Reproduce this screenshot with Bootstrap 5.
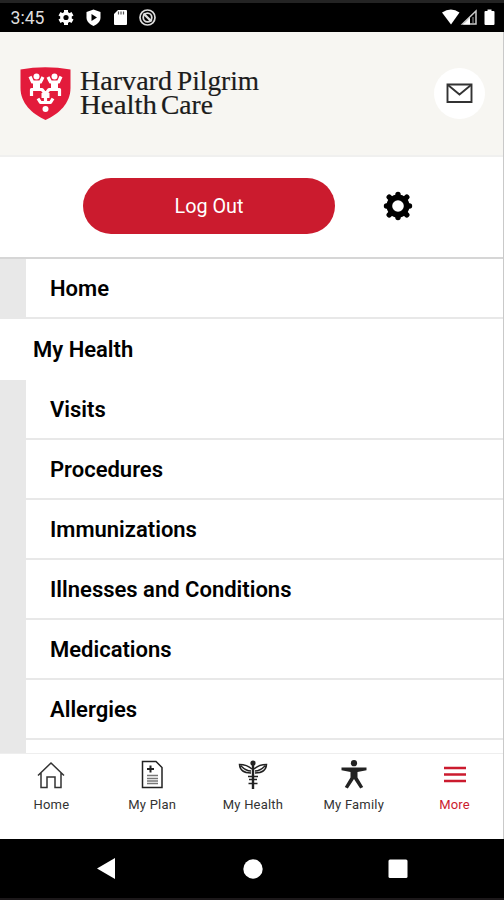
<!DOCTYPE html>
<html lang="en">
<head>
<meta charset="utf-8">
<meta name="viewport" content="width=device-width, initial-scale=1">
<title>Harvard Pilgrim Health Care</title>
<link href="https://cdn.jsdelivr.net/npm/bootstrap@5.3.0/dist/css/bootstrap.min.css" rel="stylesheet">
<style>
  body { font-family: Roboto, "Liberation Sans", sans-serif; color: #000; }
  svg { display: block; flex: none; }
  .screen { width: 504px; height: 900px; }
  .status { height: 32px; background: #000; border-top: 3px solid #232323; padding: 3px 8px 0 10px; font-size: 17px; line-height: 1; color: #e8e8e8; }
  .app { height: 807px; border-right: 1px solid #c9c9c9; }
  .brand-bar { height: 125px; background: #f7f6f2; border-bottom: 2px solid #f0f0ef; padding: 0 18px 0 20px; }
  .brand-text { font-family: "Liberation Serif", serif; font-size: 26.5px; fill: #1c1c1c; stroke: #1c1c1c; stroke-width: .2px; }
  .mail { width: 51px; height: 51px; }
  .account { height: 102px; border-bottom: 2px solid #d6d6d6; padding: 0 0 2px 83px; }
  .logout { width: 252px; height: 56px; background: #cb1b2e; color: #fff; font-size: 19.8px; padding-top: 8px; margin-right: 48px; }
  .logout:hover { background: #b31526; color: #fff; }
  .menu { background: #e8e8e8; }
  .menu .entry { height: 60px; flex: none; margin-left: 26px; padding: 1px 0 0 24px; background: #fff; border-bottom: 2px solid #e8e8e8; font-size: 22px; font-weight: 600; color: #000; text-decoration: none; }
  .menu .section-head { height: 61px; margin-left: 0; padding: 0 0 1px 33px; border: 0; }
  .tabs { height: 86px; border-top: 1px solid #eee; padding-left: 1px; }
  .tabs a { width: 100.8px; flex: none; font-size: 13px; line-height: 16px; letter-spacing: .2px; color: #333; padding-top: 5px; text-decoration: none; }
  .tabs span { margin-top: 4px; }
  .tabs a.current { color: #cb1b2e; }
  .system { height: 61px; background: #000; border-bottom: 2px solid #1c181a; }
</style>
</head>
<body class="bg-white overflow-hidden">
<div class="screen d-flex flex-column overflow-hidden">
  <div class="status d-flex align-items-center flex-shrink-0">
    <svg width="150" height="26" viewBox="0 0 150 26" fill="#fff">
      <text x="0.5" y="17.5" font-size="17.500" textLength="34" lengthAdjust="spacingAndGlyphs" fill="#dedede">3:45</text>
      <g transform="translate(56 11.5)"><g stroke="#fff" stroke-width="4"><path d="M0-7.5V7.5M-6.5-3.75 6.5 3.75M-6.5 3.75 6.5-3.75"/></g><circle r="5.8"/><circle r="2.6" fill="#000"/></g>
      <path d="M83.500 3.500 90.500 6v5.500c0 4-3 6.800-7 8.500-4-1.700-7-4.500-7-8.500V6z"/><path d="m81.500 8 5.500 3.500-5.500 3.500z" fill="#000"/>
      <path d="M108 4h8q1 0 1 1v13q0 1-1 1h-11q-1 0-1-1V8z"/><path d="M108.500 5.500v3M111 5.500v3M113.500 5.500v3" stroke="#555" stroke-width="1.200"/>
      <g transform="translate(137.500 11.500)" fill="none" stroke="#ddd"><circle r="7.500" stroke-width="1.700"/><circle r="4.300" stroke-width="1.800"/><path d="m-4-4 8 8" stroke-width="2.400"/></g>
    </svg>
    <svg class="ms-auto" width="54" height="26" viewBox="0 0 54 26" fill="#fff">
      <path d="M0 6.500Q9 .500 17.500 6.500L9 18.500z"/>
      <path d="M20.500 18 34 5v13z" fill="none" stroke="#ccc" stroke-width="1.500"/><path d="m21 18.500 7-7v7z"/><path d="M31 11v6" stroke="#999" stroke-width="1"/>
      <path d="M45.500 3.500h4V5h2q1 0 1 1v12q0 1-1 1h-8q-1 0-1-1V6q0-1 1-1h2z"/>
    </svg>
  </div>

  <div class="app d-flex flex-column flex-shrink-0 bg-white">
    <header class="brand-bar d-flex align-items-center justify-content-between flex-shrink-0">
      <svg width="250" height="60" viewBox="0 0 250 60" role="img" aria-label="Harvard Pilgrim Health Care">
        <path d="M.500 5.500Q25 1 50.500 5.500V24C50.500 39 39 50 25.500 56 12 50 .500 39 .500 24z" fill="#e31b3b"/>
        <g fill="#fff">
          <circle cx="16.500" cy="12.500" r="3"/><circle cx="34.500" cy="12.500" r="3"/><circle cx="25.500" cy="45" r="3"/>
          <path d="M10 12.500 12.500 18H20.500L23 13M28 13 30.500 18H38.500L41 12.500M11.500 32V25.500H22L25.500 30 29 25.500H39.500V32M25.500 29v10M18 34.500 20.500 38.500H30.500L33 34.500" fill="none" stroke="#fff" stroke-width="3.200" stroke-linejoin="round"/>
          <path d="M13 17h7v9h-7zM31 17h7v9h-7zM21.500 29h8v5h-8z"/>
        </g>
        <text class="brand-text" y="25.500"><tspan x="60" textLength="92" lengthAdjust="spacingAndGlyphs">Harvard</tspan> <tspan x="157" textLength="82" lengthAdjust="spacingAndGlyphs">Pilgrim</tspan></text>
        <text class="brand-text" y="50"><tspan x="60" textLength="77" lengthAdjust="spacingAndGlyphs">Health</tspan> <tspan x="141" textLength="52" lengthAdjust="spacingAndGlyphs">Care</tspan></text>
      </svg>
      <a href="#" class="mail rounded-circle bg-white d-flex align-items-center justify-content-center" aria-label="Messages">
        <svg width="27" height="21" viewBox="0 0 27 21" fill="none" stroke="#333" stroke-width="1.900"><path d="M1.500 1.500h24v17.500h-24z"/><path d="m2 2 11.500 9.500L25 2"/></svg>
      </a>
    </header>

    <div class="account d-flex align-items-center flex-shrink-0">
      <button type="button" class="logout btn rounded-pill border-0">Log Out</button>
      <svg width="30" height="30" viewBox="-15 -15 30 30" aria-label="Settings"><path d="M0-11.500V11.500M-11.500 0H11.500M-8.800-8.800 8.800 8.800M-8.800 8.800 8.800-8.800" stroke="#000" stroke-width="5.400" stroke-linecap="round"/><circle r="9" fill="none" stroke="#000" stroke-width="5"/><circle r="5.800" fill="#fff"/></svg>
    </div>

    <nav class="menu d-flex flex-column flex-grow-1 overflow-hidden">
      <a href="#" class="entry d-flex align-items-center">Home</a>
      <a href="#" class="entry section-head d-flex align-items-center">My Health</a>
      <a href="#" class="entry d-flex align-items-center">Visits</a>
      <a href="#" class="entry d-flex align-items-center">Procedures</a>
      <a href="#" class="entry d-flex align-items-center">Immunizations</a>
      <a href="#" class="entry d-flex align-items-center">Illnesses and Conditions</a>
      <a href="#" class="entry d-flex align-items-center">Medications</a>
      <a href="#" class="entry d-flex align-items-center">Allergies</a>
      <div class="entry"></div>
    </nav>

    <nav class="tabs d-flex flex-shrink-0 bg-white overflow-hidden">
      <a href="#" class="d-flex flex-column align-items-center">
        <svg width="34" height="34" viewBox="0 0 34 34" fill="none" stroke="#333" stroke-width="1.500"><path d="M4 16.500 17 4l13 12.500M7 14v14.500h6V18h8v10.500h6V14"/></svg>
        <span>Home</span>
      </a>
      <a href="#" class="d-flex flex-column align-items-center">
        <svg width="34" height="34" viewBox="0 0 34 34" fill="none" stroke="#222" stroke-width="1.500"><path d="M7.500 2.500H21l6 6v20H7.500z"/><path d="M12 10h7M15.500 6.500v7" stroke-width="2"/><path d="M12 16.500h11M12 19.500h11M12 22h11M12 24.500h11" stroke="#777"/></svg>
        <span>My Plan</span>
      </a>
      <a href="#" class="d-flex flex-column align-items-center">
        <svg width="34" height="34" viewBox="0 0 34 34" fill="none" stroke="#222" stroke-width="1.500"><circle cx="17" cy="4" r="2.600" fill="#222" stroke="none"/><path d="M17 4v26" stroke-width="2.400"/><path d="M16 10Q11 5.500 3.500 5.500 4 14 15 14M18 10q5-4.500 12.500-4.500Q30 14 19 14M5 7q5 5 10 5M29 7q-5 5-10 5"/><path d="M12 17.500h10M13 20.500h8M12.500 24.500h9"/></svg>
        <span>My Health</span>
      </a>
      <a href="#" class="d-flex flex-column align-items-center">
        <svg width="34" height="34" viewBox="0 0 34 34" fill="#222"><circle cx="17" cy="4.200" r="3.100"/><path d="M4.500 8.500h25v2.700L20.500 13v5.500l5.700 9.500-3 1.500L17 20l-6.200 9.500-3-1.500 5.700-9.500V13l-9-1.800z"/></svg>
        <span>My Family</span>
      </a>
      <a href="#" class="current d-flex flex-column align-items-center">
        <svg width="34" height="34" viewBox="0 0 34 34" stroke="#cb1b2e" stroke-width="2.400"><path d="M6 9h22M6 15.500h22M6 22h22"/></svg>
        <span>More</span>
      </a>
    </nav>
  </div>

  <div class="system d-flex flex-shrink-0">
    <svg width="504" height="59" viewBox="0 0 504 59" fill="#fff"><path d="M97 29.500 115 19v21z"/><circle cx="253" cy="30" r="9.700"/><rect x="388.500" y="20.500" width="19" height="18.500" rx="1.500"/></svg>
  </div>
</div>
<script src="https://cdn.jsdelivr.net/npm/bootstrap@5.3.0/dist/js/bootstrap.bundle.min.js"></script>
</body>
</html>
